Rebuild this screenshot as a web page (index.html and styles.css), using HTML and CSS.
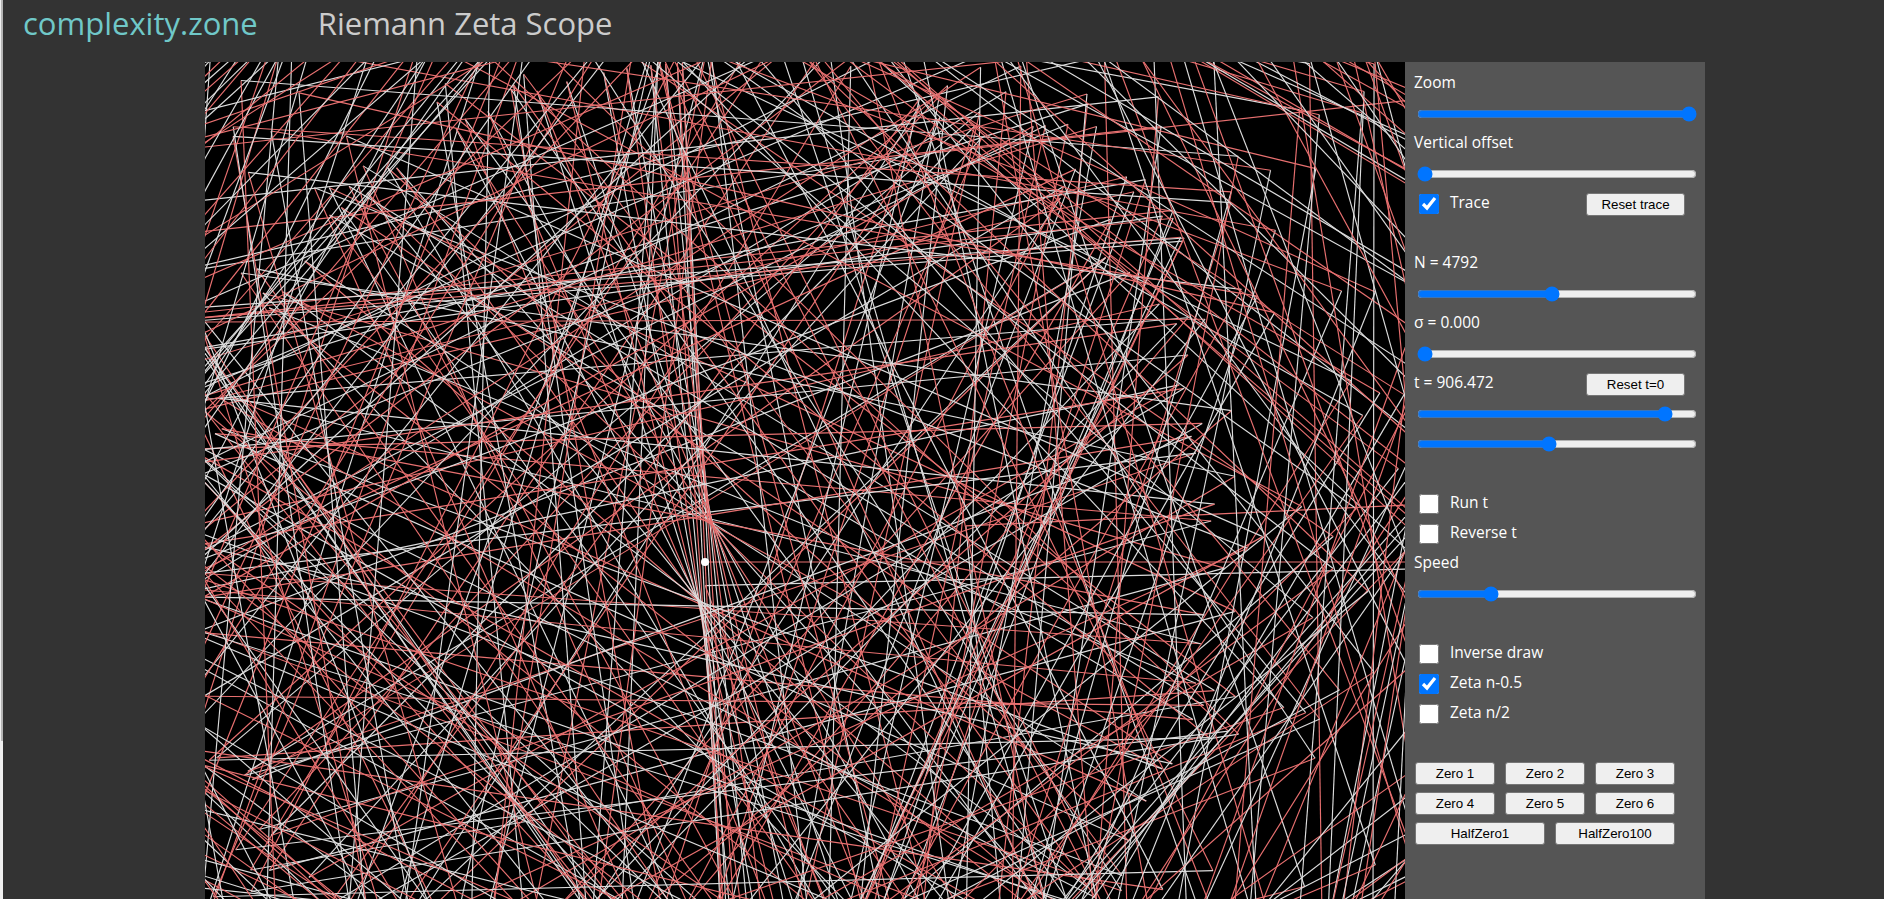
FILE: index.html
```html
<!DOCTYPE html>
<html lang="en">
<head>
<meta charset="utf-8">
<title>Riemann Zeta Scope</title>
<link rel="stylesheet" href="styles.css">
</head>
<body>
<header class="topbar">
  <a class="brand" href="#">complexity.zone</a>
  <h1 class="title">Riemann Zeta Scope</h1>
</header>
<main class="app">
  <canvas id="scope" class="scope" width="1200" height="837"></canvas>
  <aside class="panel">
    <div class="row"><label class="lbl">Zoom</label></div>
    <div class="row"><input class="slider" type="range" min="0" max="100" value="100"></div>
    <div class="row"><label class="lbl">Vertical offset</label></div>
    <div class="row"><input class="slider" type="range" min="0" max="100" value="0"></div>
    <div class="row check-row"><input class="check" type="checkbox" checked><span class="lbl">Trace</span><button class="btn btn-side">Reset trace</button></div>
    <div class="row"></div>
    <div class="row"><label class="lbl">N = 4792</label></div>
    <div class="row"><input class="slider" type="range" min="0" max="100" value="47.9"></div>
    <div class="row"><label class="lbl">σ = 0.000</label></div>
    <div class="row"><input class="slider" type="range" min="0" max="100" value="0"></div>
    <div class="row check-row"><label class="lbl">t = 906.472</label><button class="btn btn-side">Reset t=0</button></div>
    <div class="row"><input class="slider" type="range" min="0" max="100" value="90.6"></div>
    <div class="row"><input class="slider" type="range" min="0" max="100" value="47"></div>
    <div class="row"></div>
    <div class="row check-row"><input class="check" type="checkbox"><span class="lbl">Run t</span></div>
    <div class="row check-row"><input class="check" type="checkbox"><span class="lbl">Reverse t</span></div>
    <div class="row"><label class="lbl">Speed</label></div>
    <div class="row"><input class="slider" type="range" min="0" max="100" value="25"></div>
    <div class="row"></div>
    <div class="row check-row"><input class="check" type="checkbox"><span class="lbl">Inverse draw</span></div>
    <div class="row check-row"><input class="check" type="checkbox" checked><span class="lbl">Zeta n-0.5</span></div>
    <div class="row check-row"><input class="check" type="checkbox"><span class="lbl">Zeta n/2</span></div>
    <div class="row"></div>
    <div class="row btn-row"><button class="btn btn-zero">Zero 1</button><button class="btn btn-zero">Zero 2</button><button class="btn btn-zero">Zero 3</button></div>
    <div class="row btn-row"><button class="btn btn-zero">Zero 4</button><button class="btn btn-zero">Zero 5</button><button class="btn btn-zero">Zero 6</button></div>
    <div class="row btn-row"><button class="btn btn-half1">HalfZero1</button><button class="btn btn-half2">HalfZero100</button></div>
  </aside>
</main>
<script src="scope.js"></script>
</body>
</html>
```
FILE: styles.css
```css
* { box-sizing: border-box; }
html, body { height: 100%; }
body {
  margin: 0;
  background: #333;
  color: #fff;
  font-family: "Open Sans", sans-serif;
  overflow: hidden;
  border-left: 3px solid #f0f0f0;
}
body::before {
  content: "";
  position: fixed;
  left: 1px;
  top: 0;
  width: 2px;
  height: 741px;
  background: #b5b5b5;
}
.topbar { display: flex; align-items: center; height: 62px; padding: 0 0 16px 20px; gap: 60px; }
.brand { color: #70c8c8; font-size: 31px; text-decoration: none; line-height: 46px; }
.title { margin: 0; color: #ccc; font-size: 31px; font-weight: 400; line-height: 46px; }
.app { display: flex; margin-left: 202px; width: 1500px; height: 837px; }
.scope { display: block; width: 1200px; height: 837px; background: #000; }
.panel { width: 300px; height: 837px; background: #555; padding-top: 7px; }
.row { height: 30px; display: flex; align-items: center; padding-left: 9px; }
.lbl { display: block; position: relative; top: -2px; color: #fff; font-size: 15.5px; font-weight: 500; }
.slider { width: 280px; margin: 0 0 0 3px; }
.check { width: 20px; height: 20px; margin: 0 11px 0 5px; }
.btn {
  font-family: "Liberation Sans", sans-serif;
  font-size: 13.33px;
  height: 23px;
  padding: 0;
  background: #efefef;
  color: #000;
  border: 1px solid #767676;
  border-radius: 3px;
}
.btn-side { width: 99px; margin-left: auto; margin-right: 20px; }
.btn-row { padding-left: 10px; padding-top: 3px; gap: 10px; align-items: flex-start; }
.btn-zero { width: 80px; }
.btn-half1 { width: 130px; }
.btn-half2 { width: 120px; }
```
FILE: scope.js
```js
(function () {
  var c = document.getElementById('scope');
  var g = c.getContext('2d');
  var N = 4792, t = 906.472, L = 1000;
  var ox = 500, oy = 500;
  var x = ox, y = oy;
  g.lineWidth = 1.15;
  for (var n = 1; n <= N; n++) {
    var m = n - 0.5;
    var a = t * Math.log(m);
    var nx = x + L * Math.cos(a);
    var ny = y + L * Math.sin(a);
    g.strokeStyle = n % 2 ? '#e87070' : '#dddddd';
    g.beginPath();
    g.moveTo(x, y);
    g.lineTo(nx, ny);
    g.stroke();
    x = nx; y = ny;
  }
  g.fillStyle = '#fff';
  g.beginPath();
  g.arc(ox, oy, 4, 0, 7);
  g.fill();
})();
```
